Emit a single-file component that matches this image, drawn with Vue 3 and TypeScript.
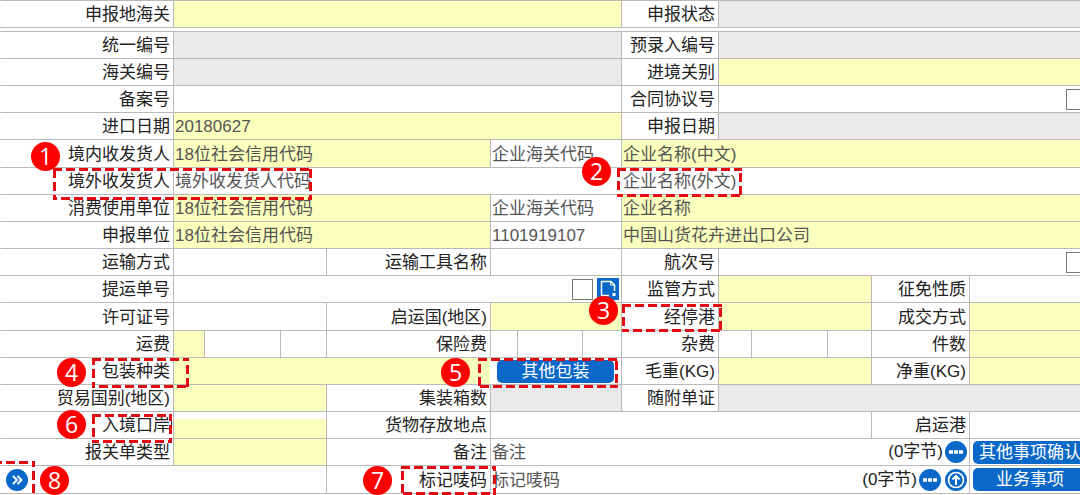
<script setup lang="ts">
import { ref } from 'vue'

type Tone = 'plain' | 'need' | 'off'
interface Part { flex: number; tone: Tone }
interface Cell {
  kind: 'label' | 'input' | 'split' | 'check' | 'bill' | 'pack' | 'note' | 'action' | 'more'
  span: number
  text?: string
  value?: string
  tone?: Tone
  parts?: Part[]
  upload?: boolean
  open?: boolean
  caret?: boolean
  inset?: boolean
}
interface Callout { n: number; x: number; y: number; bx: number; by: number; w: number; h: number }

const label = (text: string, extra: Partial<Cell> = {}): Cell => ({ kind: 'label', span: 1, text, ...extra })
const input = (span: number, tone: Tone = 'plain', text = '', extra: Partial<Cell> = {}): Cell => ({ kind: 'input', span, tone, text, ...extra })
const split = (a: number, b: number, c: number, first: Tone = 'plain'): Cell => ({
  kind: 'split',
  span: 1,
  parts: [{ flex: a, tone: first }, { flex: b, tone: 'plain' }, { flex: c, tone: 'plain' }],
})

const head: Cell[][] = [
  [label('申报地海关'), input(3, 'need'), label('申报状态'), input(3, 'off')],
]

const body: Cell[][] = [
  [label('统一编号'), input(3, 'off'), label('预录入编号'), input(3, 'off')],
  [label('海关编号'), input(3, 'off'), label('进境关别'), input(3, 'need')],
  [label('备案号'), input(3), label('合同协议号'), { kind: 'check', span: 3 }],
  [label('进口日期'), input(3, 'need', '', { value: '20180627' }), label('申报日期'), input(3, 'off')],
  [label('境内收发货人'), input(2, 'need', '18位社会信用代码'), input(1, 'plain', '企业海关代码'), input(4, 'need', '企业名称(中文)')],
  [label('境外收发货人'), input(3, 'plain', '境外收发货人代码'), input(4, 'plain', '企业名称(外文)', { open: true })],
  [label('消费使用单位'), input(2, 'need', '18位社会信用代码'), input(1, 'plain', '企业海关代码'), input(4, 'need', '企业名称')],
  [label('申报单位'), input(2, 'need', '18位社会信用代码'), input(1, 'plain', '', { value: '1101919107' }), input(4, 'need', '', { value: '中国山货花卉进出口公司' })],
  [label('运输方式'), input(1), label('运输工具名称'), input(1), label('航次号'), { kind: 'check', span: 3 }],
  [label('提运单号'), { kind: 'bill', span: 3 }, label('监管方式'), input(1, 'need'), label('征免性质'), input(1)],
  [label('许可证号'), input(1), label('启运国(地区)'), input(1, 'need'), label('经停港'), input(1, 'need'), label('成交方式'), input(1, 'need')],
  [label('运费'), split(31, 76, 46, 'need'), label('保险费'), split(27, 65, 39), label('杂费'), split(33, 76, 44), label('件数'), input(1, 'need')],
  [label('包装种类'), input(2, 'need'), { kind: 'pack', span: 1, text: '其他包装', open: true }, label('毛重(KG)'), input(1, 'need'), label('净重(KG)'), input(1, 'need')],
  [label('贸易国别(地区)'), input(1, 'need'), label('集装箱数'), input(1, 'off'), label('随附单证'), input(3, 'off')],
  [label('入境口岸', { caret: true }), input(1, 'need', '', { inset: true }), label('货物存放地点'), input(3), label('启运港'), input(1)],
  [label('报关单类型'), input(1, 'need'), label('备注'), { kind: 'note', span: 4, text: '备注' }, { kind: 'action', span: 1, text: '其他事项确认' }],
  [{ kind: 'more', span: 2 }, label('标记唛码'), { kind: 'note', span: 4, text: '标记唛码', upload: true }, { kind: 'action', span: 1, text: '业务事项' }],
]

const blocks = [head, body]

// x values are on a 1080-wide scale and become percentages of the form's width
const callouts: Callout[] = [
  { n: 1, x: 45, y: 156, bx: 53, by: 168, w: 259, h: 32 },
  { n: 2, x: 596, y: 171, bx: 617, by: 168, w: 125, h: 29 },
  { n: 3, x: 603, y: 310, bx: 622, by: 304, w: 100, h: 28 },
  { n: 4, x: 71, y: 372, bx: 92, by: 358, w: 97, h: 30 },
  { n: 5, x: 455, y: 372, bx: 478, by: 358, w: 140, h: 30 },
  { n: 6, x: 71, y: 424, bx: 92, by: 414, w: 80, h: 29 },
  { n: 7, x: 377, y: 480, bx: 401, by: 466, w: 95, h: 29 },
  { n: 8, x: 54, y: 480, bx: -20, by: 461, w: 55, h: 50 },
]
const pct = (x: number) => `${(x / 1080) * 100}%`

const expanded = ref(false)
const fieldId = (b: number, r: number, c: number) => `field-${b}-${r}-${c}`
</script>

<template>
  <main class="page">
    <form class="form" @submit.prevent>
      <section v-for="(rows, b) in blocks" :key="b" class="block">
        <div v-for="(row, r) in rows" :key="r" class="row" :class="{ tall: b === 1 && r % 6 === 4 }">
          <template v-for="(cell, c) in row" :key="c">
            <label
              v-if="cell.kind === 'label'"
              class="cell name"
              :class="{ caret: cell.caret }"
              :for="fieldId(b, r, c + 1)"
            >{{ cell.text }}</label>

            <div v-else class="cell" :class="['span-' + cell.span, cell.kind, { open: cell.open, inset: cell.inset }]">
              <input
                v-if="cell.kind === 'input'"
                :id="fieldId(b, r, c)"
                class="field"
                :class="cell.tone"
                type="text"
                :placeholder="cell.text"
                :value="cell.value"
                :disabled="cell.tone === 'off'"
                :aria-label="cell.text || undefined"
              >

              <template v-else-if="cell.kind === 'split'">
                <input
                  v-for="(p, i) in cell.parts"
                  :id="i === 0 ? fieldId(b, r, c) : undefined"
                  :key="i"
                  class="field part"
                  :class="p.tone"
                  :style="{ flexGrow: p.flex }"
                  type="text"
                  :aria-label="`${row[c - 1].text} ${i + 1}`"
                >
              </template>

              <template v-else-if="cell.kind === 'check' || cell.kind === 'bill'">
                <input :id="fieldId(b, r, c)" class="field" type="text">
                <input class="tick" type="checkbox" :aria-label="`${row[c - 1].text} 选择`">
                <button v-if="cell.kind === 'bill'" type="button" class="doc" aria-label="提运单">
                  <svg viewBox="0 0 22 22" width="22" height="22" aria-hidden="true">
                    <path d="M12 17.500H4.500V3.500H14L17.500 7V13" fill="none" stroke="#fff" stroke-width="1.500" />
                    <path d="M13.500 3.500V7H17.500" fill="none" stroke="#fff" stroke-width="1" />
                    <path d="M15.500 15h3v3h-3z" fill="#fff" />
                  </svg>
                </button>
              </template>

              <button v-else-if="cell.kind === 'pack'" type="button" class="btn wide">{{ cell.text }}</button>
              <button v-else-if="cell.kind === 'action'" type="button" class="btn">{{ cell.text }}</button>

              <template v-else-if="cell.kind === 'note'">
                <input :id="fieldId(b, r, c)" class="field" type="text" :placeholder="cell.text">
                <span class="bytes">(0字节)</span>
                <button type="button" class="round" :aria-label="`编辑${cell.text}`">
                  <svg viewBox="0 0 22 22" width="22" height="22" aria-hidden="true">
                    <circle cx="11" cy="11" r="11" fill="#0a68c8" />
                    <path d="M4 9.300h4v3.400h-4zM9 9.300h4v3.400h-4zM14 9.300h4v3.400h-4z" fill="#fff" />
                  </svg>
                </button>
                <button v-if="cell.upload" type="button" class="round" aria-label="上传">
                  <svg viewBox="0 0 22 22" width="22" height="22" aria-hidden="true">
                    <circle cx="11" cy="11" r="11" fill="#0a68c8" />
                    <circle cx="11" cy="11" r="7.500" fill="none" stroke="#fff" stroke-width="1.700" />
                    <path d="M11 16V7M7.500 10.500L11 7l3.500 3.500" fill="none" stroke="#fff" stroke-width="2" />
                  </svg>
                </button>
              </template>

              <button
                v-else
                type="button"
                class="round"
                aria-label="展开"
                :aria-expanded="expanded"
                @click="expanded = !expanded"
              >
                <svg viewBox="0 0 22 22" width="22" height="22" aria-hidden="true">
                  <circle cx="11" cy="11" r="11" fill="#0a68c8" />
                  <path d="M7 7l4 4-4 4M11.500 7l4 4-4 4" fill="none" stroke="#fff" stroke-width="1.900" />
                </svg>
              </button>
            </div>
          </template>
        </div>
      </section>
    </form>

    <div v-for="m in callouts" :key="m.n" class="callout">
      <svg
        class="frame"
        :style="{ left: pct(m.bx), top: `${m.by}px`, width: pct(m.w), height: `${m.h}px` }"
        aria-hidden="true"
      >
        <rect width="100%" height="100%" fill="none" stroke="#e30b13" stroke-width="6" stroke-dasharray="9 4" />
      </svg>
      <span class="badge" :style="{ left: pct(m.x), top: `${m.y}px` }">{{ m.n }}</span>
    </div>
  </main>
</template>

<style>
body {
  margin: 0;
  background: #fff;
}
</style>

<style scoped>
.page {
  position: relative;
  overflow: hidden;
  padding-bottom: 1px;
  font-family: "Liberation Sans", "Noto Sans CJK SC", sans-serif;
  font-size: 17px;
  line-height: 24px;
  color: #222;
}
.form {
  display: flex;
  flex-direction: column;
  gap: 3px;
}
.block {
  border-bottom: 1px solid #b9b9b9;
}
.row {
  display: grid;
  grid-template-columns:
    minmax(0, 173fr) minmax(0, 153fr) minmax(0, 164fr) minmax(0, 131fr)
    minmax(0, 97fr) minmax(0, 153fr) minmax(0, 98fr) minmax(0, 111fr);
  grid-auto-rows: 27px;
}
.tall {
  grid-auto-rows: 28px;
}
.cell {
  box-sizing: border-box;
  display: flex;
  align-items: center;
  min-width: 0;
  border-top: 1px solid #b9b9b9;
  border-left: 1px solid #b9b9b9;
  overflow: hidden;
}
.cell:first-child,
.open {
  border-left-color: transparent;
}
.name {
  justify-content: flex-end;
  padding: 2px 3px 0 0;
  white-space: nowrap;
}
.caret {
  padding-right: 1px;
}
.caret::after {
  content: "";
  width: 1px;
  height: 16px;
  margin-left: 1px;
  background: #222;
}
.span-2 { grid-column: span 2; }
.span-3 { grid-column: span 3; }
.span-4 { grid-column: span 4; }
.field {
  box-sizing: border-box;
  flex: 1 1 0;
  align-self: stretch;
  width: 0;
  min-width: 0;
  margin: 0;
  padding: 2px 0 0 1px;
  border: 0;
  border-radius: 0;
  outline: 0;
  background: #fff;
  color: #555;
  font: inherit;
}
.field::placeholder {
  color: #555;
  opacity: 1;
}
.part { padding: 0; }
.need { background: #faffbd; }
.off { background: #eaeaea; }
.inset { padding-top: 7px; }
.part + .part {
  border-left: 1px solid #b9b9b9;
}
.tick {
  appearance: none;
  box-sizing: border-box;
  flex: none;
  width: 21px;
  height: 21px;
  margin: 0;
  border: 1px solid #777;
  background: #fff;
}
.check .tick {
  margin-right: -7px;
}
.bill,
.note {
  gap: 4px;
  padding-right: 2px;
}
.doc,
.round {
  flex: none;
  display: flex;
  width: 22px;
  height: 22px;
  padding: 0;
  border: 0;
  background: none;
}
.doc { background: #0a68c8; }
.round { border-radius: 50%; }
.bytes {
  margin-right: -2px;
  white-space: nowrap;
}
.btn {
  flex: none;
  width: 114px;
  height: 23px;
  padding: 0;
  border: 0;
  border-radius: 5px;
  background: #0a68c8;
  color: #fff;
  font: inherit;
  line-height: 23px;
  white-space: nowrap;
}
.wide { width: 117px; }
.pack { padding-left: 6px; }
.action { padding-left: 3px; }
.more { padding-left: 5px; }
.frame,
.badge {
  position: absolute;
  pointer-events: none;
}
.badge {
  width: 29px;
  height: 29px;
  margin: -14px 0 0 -14px;
  border-radius: 50%;
  background: #fe0000;
  color: #fff;
  font-family: "Open Sans", sans-serif;
  font-weight: 500;
  font-size: 23px;
  line-height: 28px;
  text-align: center;
}
</style>
